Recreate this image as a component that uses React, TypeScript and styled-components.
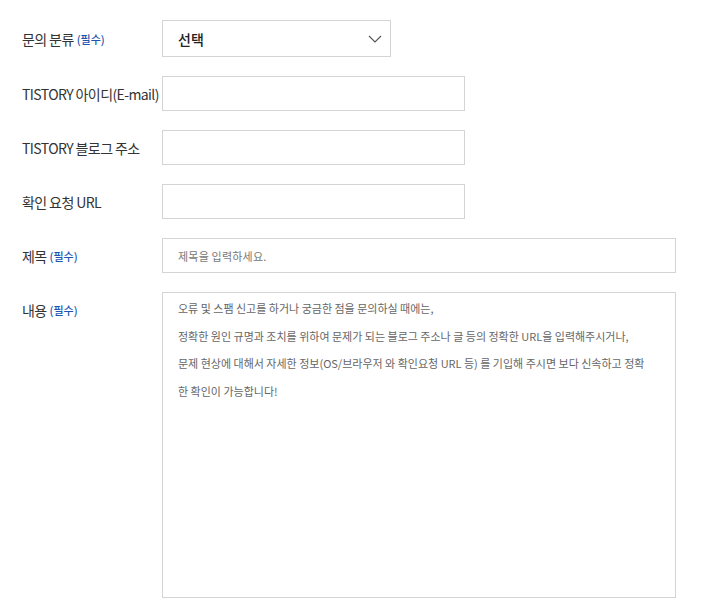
import React from "react";
import styled, { createGlobalStyle } from "styled-components";

const Global = createGlobalStyle`
  html, body { margin: 0; padding: 0; background: #fff; }
  body { font-family: "Noto Sans CJK KR", "Noto Sans", sans-serif; color: #333; }
`;

const Form = styled.div`
  display: grid;
  grid-template-columns: 140px 514px;
  row-gap: 19px;
  padding: 20px 0 0 22px;
  align-items: start;
`;

const Label = styled.div<{ $h: number }>`
  height: ${(p) => p.$h}px;
  display: flex;
  align-items: center;
  font-size: 14px;
  letter-spacing: -0.6px;
  color: #333;
  white-space: nowrap;
`;

const Required = styled.span`
  font-size: 11px;
  font-weight: 500;
  color: #1c55b0;
  margin-left: 3px;
  letter-spacing: 0;
`;

const Select = styled.div`
  width: 229px;
  height: 37px;
  box-sizing: border-box;
  border: 1px solid #d4d4d4;
  display: flex;
  align-items: center;
  justify-content: space-between;
  padding: 0 8px 0 15px;
  font-size: 14px;
  font-weight: 500;
  color: #222;
`;

const Input = styled.div<{ $w: number }>`
  width: ${(p) => p.$w}px;
  height: 35px;
  box-sizing: border-box;
  border: 1px solid #d4d4d4;
  display: flex;
  align-items: center;
  padding: 0 15px;
  font-size: 11px;
  letter-spacing: 0.2px;
  color: #777;
`;

const TextArea = styled.div`
  width: 514px;
  height: 306px;
  box-sizing: border-box;
  border: 1px solid #d4d4d4;
  padding: 2px 15px;
  font-size: 11px;
  letter-spacing: 0;
  line-height: 27.5px;
  color: #666;
`;

const Line = styled.div`
  white-space: nowrap;
`;

const Chevron = () => (
  <svg width="14" height="8" viewBox="0 0 14 8" fill="none">
    <path d="M1 1l6 6 6-6" stroke="#555" strokeWidth="1.1" />
  </svg>
);

export default function App() {
  return (
    <>
      <Global />
      <Form>
        <Label $h={37}>
          문의 분류<Required>(필수)</Required>
        </Label>
        <Select>
          <span>선택</span>
          <Chevron />
        </Select>

        <Label $h={35}>TISTORY 아이디(E-mail)</Label>
        <Input $w={303} />

        <Label $h={35}>TISTORY 블로그 주소</Label>
        <Input $w={303} />

        <Label $h={35}>확인 요청 URL</Label>
        <Input $w={303} />

        <Label $h={35}>
          제목<Required>(필수)</Required>
        </Label>
        <Input $w={514}>제목을 입력하세요.</Input>

        <Label $h={35}>
          내용<Required>(필수)</Required>
        </Label>
        <TextArea>
          <Line>오류 및 스팸 신고를 하거나 궁금한 점을 문의하실 때에는,</Line>
          <Line>정확한 원인 규명과 조치를 위하여 문제가 되는 블로그 주소나 글 등의 정확한 URL을 입력해주시거나,</Line>
          <Line>문제 현상에 대해서 자세한 정보(OS/브라우저 와 확인요청 URL 등) 를 기입해 주시면 보다 신속하고 정확</Line>
          <Line>한 확인이 가능합니다!</Line>
        </TextArea>
      </Form>
    </>
  );
}
